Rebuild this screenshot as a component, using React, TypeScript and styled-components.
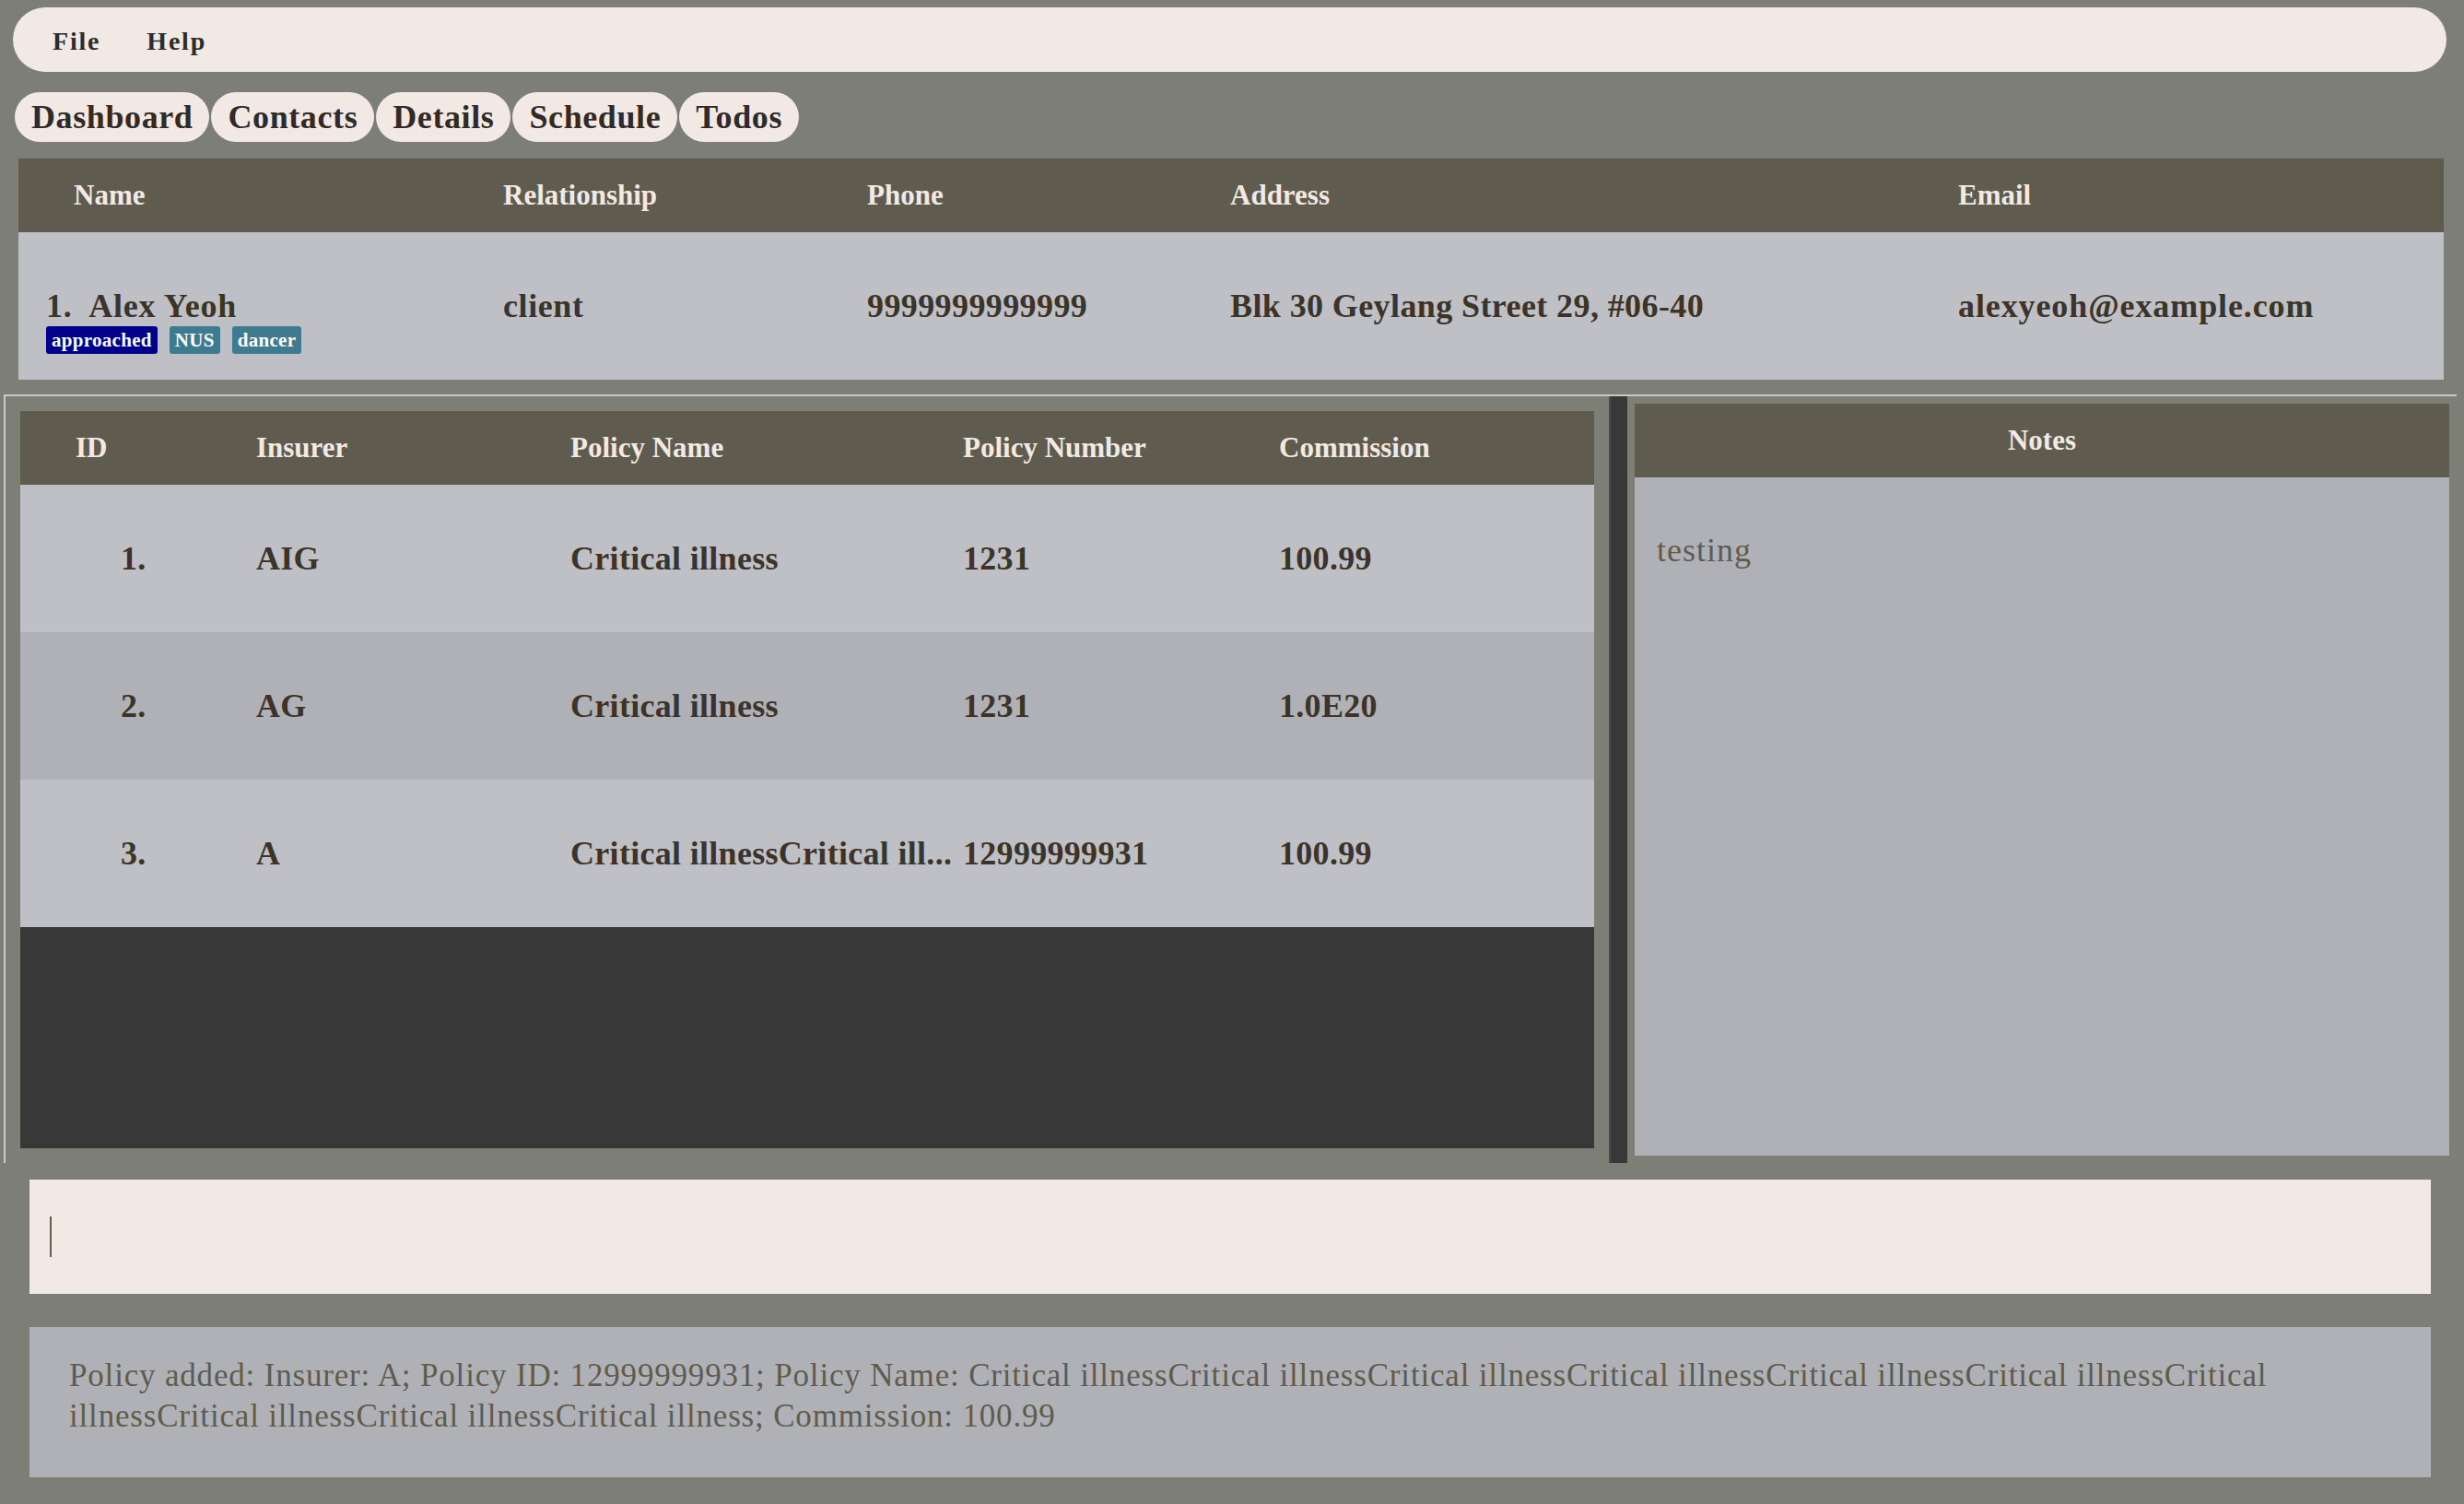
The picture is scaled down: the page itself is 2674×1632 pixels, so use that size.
import React from "react";
import styled, { createGlobalStyle } from "styled-components";

const GlobalStyle = createGlobalStyle`
  html, body {
    margin: 0;
    padding: 0;
    background: #7d7e75;
  }
  * { box-sizing: border-box; }
`;

const Page = styled.div`
  display: flex;
  flex-direction: column;
  width: 2674px;
  height: 1632px;
  background: #7d7e75;
  font-family: "Liberation Serif", "Times New Roman", serif;
  overflow: hidden;
`;

const MenuBar = styled.div`
  display: flex;
  align-items: center;
  height: 70px;
  margin: 8px 19px 0 14px;
  padding: 3px 0 0 18px;
  border-radius: 35px;
  background: #f2e9e4;
`;

const MenuItem = styled.span`
  padding: 0 25px;
  font-size: 28px;
  font-weight: bold;
  letter-spacing: 1.8px;
  color: #302b28;
`;

const TabRow = styled.div`
  display: flex;
  gap: 2px;
  margin: 22px 0 0 16px;
  height: 54px;
`;

const Tab = styled.div`
  display: flex;
  align-items: center;
  height: 54px;
  padding: 0 18px;
  border-radius: 27px;
  background: #f2e9e4;
  font-size: 36px;
  font-weight: bold;
  letter-spacing: 0.6px;
  color: #302b28;
`;

const contactCols = "526px 395px 394px 790px 1fr";
const policyCols = "256px 341px 426px 343px 1fr";

const ContactTable = styled.div`
  margin: 18px 22px 0 20px;
  display: flex;
  flex-direction: column;
`;

const HeaderRow = styled.div<{ $cols: string }>`
  display: grid;
  grid-template-columns: ${(p) => p.$cols};
  align-items: center;
  height: 80px;
  background: #5f5c4f;
  flex-shrink: 0;
`;

const HeaderCell = styled.div<{ $pad?: number }>`
  padding-left: ${(p) => p.$pad ?? 0}px;
  font-size: 31px;
  font-weight: bold;
  color: #f2e9e4;
  white-space: nowrap;
`;

const ContactRow = styled.div`
  display: grid;
  grid-template-columns: ${contactCols};
  align-items: start;
  height: 160px;
  padding-top: 60px;
  background: #bfc0c5;
`;

const BodyCell = styled.div<{ $pad?: number; $spacing?: number }>`
  padding-left: ${(p) => p.$pad ?? 0}px;
  font-size: 36px;
  line-height: 40px;
  font-weight: bold;
  letter-spacing: ${(p) => p.$spacing ?? 0.3}px;
  color: #3d3429;
  white-space: pre;
`;

const NameCell = styled.div`
  display: flex;
  flex-direction: column;
  padding-left: 30px;
`;

const TagList = styled.div`
  display: flex;
  gap: 13px;
  margin-top: 2px;
`;

const Tag = styled.span<{ $bg: string }>`
  display: inline-flex;
  align-items: center;
  height: 30px;
  padding: 0 6px;
  border-radius: 3px;
  background: ${(p) => p.$bg};
  color: #ffffff;
  font-size: 21px;
  font-weight: bold;
  letter-spacing: 0.3px;
`;

const Split = styled.div`
  display: flex;
  height: 834px;
  margin: 16px 8px 0 4px;
  border-top: 2px solid #c9c9c2;
  border-left: 2px solid #c9c9c2;
`;

const PolicyPane = styled.div`
  width: 1740px;
  padding: 16px;
  display: flex;
`;

const PolicyTable = styled.div`
  flex: 1;
  display: flex;
  flex-direction: column;
  background: #383838;
`;

const PolicyRow = styled.div<{ $alt: boolean }>`
  display: grid;
  grid-template-columns: ${policyCols};
  align-items: center;
  height: 160px;
  flex-shrink: 0;
  background: ${(p) => (p.$alt ? "#b0b1b6" : "#bfc0c5")};
`;

const Divider = styled.div`
  width: 20px;
  background: #383838;
  border-left: 2px solid #4c4c4c;
`;

const NotesPane = styled.div`
  flex: 1;
  padding: 8px;
  display: flex;
`;

const NotesCard = styled.div`
  flex: 1;
  display: flex;
  flex-direction: column;
  background: #b0b1b6;
`;

const NotesHeader = styled.div`
  display: flex;
  align-items: center;
  justify-content: center;
  height: 80px;
  background: #5f5c4f;
  font-size: 31px;
  font-weight: bold;
  color: #f2e9e4;
`;

const NotesBody = styled.div`
  padding: 58px 24px;
  font-size: 36px;
  letter-spacing: 1px;
  color: #5f5c4f;
`;

const CommandBox = styled.div`
  display: flex;
  align-items: center;
  height: 124px;
  margin: 18px 36px 0 32px;
  padding-left: 22px;
  background: #f2e9e4;
`;

const Caret = styled.span`
  width: 2px;
  height: 44px;
  background: #5f5c4f;
`;

const ResultBox = styled.div`
  height: 163px;
  margin: 36px 36px 0 32px;
  padding: 31px 43px;
  background: #b0b1b6;
  font-size: 35px;
  line-height: 44px;
  letter-spacing: 0.82px;
  color: #5f5c4f;
`;

const truncate = (text: string, max: number) =>
  text.length > max ? `${text.slice(0, max)}...` : text;

const longName = Array(10).fill("Critical illness").join("");

const policies = [
  { id: "1.", insurer: "AIG", name: "Critical illness", number: "1231", commission: "100.99" },
  { id: "2.", insurer: "AG", name: "Critical illness", number: "1231", commission: "1.0E20" },
  { id: "3.", insurer: "A", name: longName, number: "12999999931", commission: "100.99" },
];

export default function App() {
  return (
    <Page>
      <GlobalStyle />
      <MenuBar>
        <MenuItem>File</MenuItem>
        <MenuItem>Help</MenuItem>
      </MenuBar>

      <TabRow>
        {["Dashboard", "Contacts", "Details", "Schedule", "Todos"].map((t) => (
          <Tab key={t}>{t}</Tab>
        ))}
      </TabRow>

      <ContactTable>
        <HeaderRow $cols={contactCols}>
          <HeaderCell $pad={60}>Name</HeaderCell>
          <HeaderCell>Relationship</HeaderCell>
          <HeaderCell>Phone</HeaderCell>
          <HeaderCell>Address</HeaderCell>
          <HeaderCell>Email</HeaderCell>
        </HeaderRow>
        <ContactRow>
          <NameCell>
            <BodyCell $spacing={0.8}>{"1.  Alex Yeoh"}</BodyCell>
            <TagList>
              <Tag $bg="#00008b">approached</Tag>
              <Tag $bg="#3e7b91">NUS</Tag>
              <Tag $bg="#3e7b91">dancer</Tag>
            </TagList>
          </NameCell>
          <BodyCell $spacing={0.6}>client</BodyCell>
          <BodyCell $spacing={0.4}>9999999999999</BodyCell>
          <BodyCell $spacing={0.4}>Blk 30 Geylang Street 29, #06-40</BodyCell>
          <BodyCell $spacing={0.9}>alexyeoh@example.com</BodyCell>
        </ContactRow>
      </ContactTable>

      <Split>
        <PolicyPane>
          <PolicyTable>
            <HeaderRow $cols={policyCols}>
              <HeaderCell $pad={60}>ID</HeaderCell>
              <HeaderCell>Insurer</HeaderCell>
              <HeaderCell>Policy Name</HeaderCell>
              <HeaderCell>Policy Number</HeaderCell>
              <HeaderCell>Commission</HeaderCell>
            </HeaderRow>
            {policies.map((p, i) => (
              <PolicyRow key={p.id} $alt={i % 2 === 1}>
                <BodyCell $pad={109}>{p.id}</BodyCell>
                <BodyCell>{p.insurer}</BodyCell>
                <BodyCell>{truncate(p.name, 28)}</BodyCell>
                <BodyCell>{p.number}</BodyCell>
                <BodyCell>{p.commission}</BodyCell>
              </PolicyRow>
            ))}
          </PolicyTable>
        </PolicyPane>
        <Divider />
        <NotesPane>
          <NotesCard>
            <NotesHeader>Notes</NotesHeader>
            <NotesBody>testing</NotesBody>
          </NotesCard>
        </NotesPane>
      </Split>

      <CommandBox>
        <Caret />
      </CommandBox>

      <ResultBox>
        {`Policy added: Insurer: A; Policy ID: 12999999931; Policy Name: ${longName}; Commission: 100.99`}
      </ResultBox>
    </Page>
  );
}
